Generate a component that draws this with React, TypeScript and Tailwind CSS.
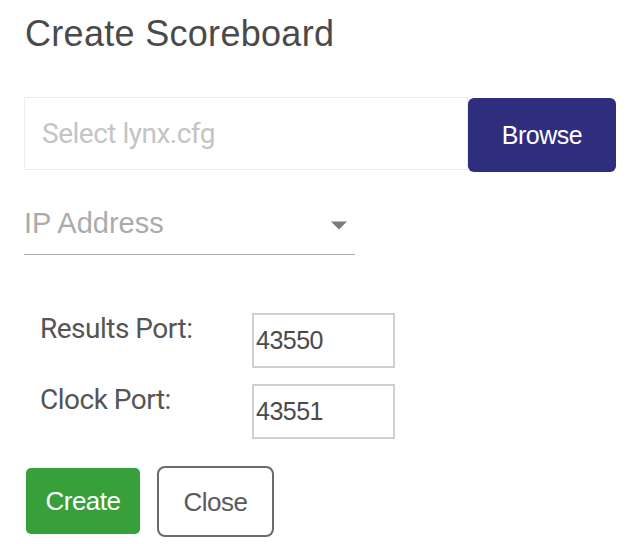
export default function App() {
  const ports = [
    { label: 'Results Port:', value: '43550' },
    { label: 'Clock Port:', value: '43551' },
  ];

  return (
    <div className="w-[640px] h-[544px] bg-white pl-6 pt-4 font-['Liberation_Sans',Arial,sans-serif]">
      {/* Title */}
      <h1 className="text-[36px] leading-none h-[35px] text-[#4a4a4a] ml-px tracking-[0.3px]">Create Scoreboard</h1>

      {/* Config file picker */}
      <div className="mt-[46px] flex items-start">
        <div className="w-[444px] h-[73px] border border-[#ececec] flex items-center pl-[17px]">
          <span className="font-['Roboto',sans-serif] text-[28px] leading-none tracking-[-0.5px] text-[#c4c4c4]">
            Select lynx.cfg
          </span>
        </div>
        <button className="mt-px w-[148px] h-[74px] rounded-md bg-[#2e2d7e] text-white text-[25px] leading-none tracking-[-0.5px]">
          Browse
        </button>
      </div>

      {/* IP select */}
      <div className="mt-[37px] w-[331px] border-b border-[#a9a9a9] pb-[16px] flex items-center justify-between pr-[7px]">
        <span className="text-[29px] leading-none text-[#ababab]">IP Address</span>
        <svg width="18" height="9" viewBox="0 0 18 9" className="mt-[3px]">
          <path d="M1 0.5 L17 0.5 L9 8.5 Z" fill="#7a7a7a" />
        </svg>
      </div>

      {/* Ports */}
      <div className="mt-[58px] ml-4 grid grid-cols-[212px_143px] gap-y-4">
        {ports.map((p) => (
          <div key={p.label} className="contents">
            <div className="pt-[2px] font-['Roboto',sans-serif] text-[28px] leading-none tracking-[-0.5px] text-[#555]">
              {p.label}
            </div>
            <input
              readOnly
              defaultValue={p.value}
              className="w-[143px] h-[55px] border-2 border-[#cfcfcf] pl-[2px] text-[25px] tracking-[-0.5px] text-[#4a4a4a] outline-none"
            />
          </div>
        ))}
      </div>

      {/* Actions */}
      <div className="mt-[27px] flex items-start">
        <button className="ml-[2px] mt-[2px] w-[114px] h-[66px] rounded-[5px] bg-[#37a03b] text-white text-[26px] leading-none tracking-[-0.5px]">
          Create
        </button>
        <button className="ml-[17px] w-[117px] h-[71px] rounded-lg border-2 border-[#6a6a6a] bg-white text-[#5a5a5a] text-[26px] leading-none tracking-[-0.5px]">
          Close
        </button>
      </div>
    </div>
  );
}
